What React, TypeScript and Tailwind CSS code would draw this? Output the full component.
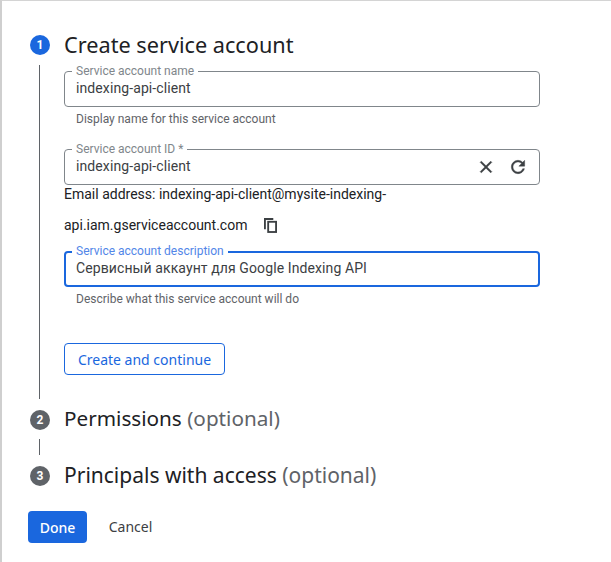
const roboto = "font-['Roboto','Liberation_Sans',sans-serif]";

function Badge({ n, active }: { n: number; active?: boolean }) {
  return (
    <div className={`w-5 h-5 rounded-full flex items-center justify-center text-white text-[12px] font-bold shrink-0 ${active ? "bg-[#1a67de]" : "bg-[#5f6368]"}`}>
      {n}
    </div>
  );
}

function Field({ label, value, focused, helper, children }: { label: string; value: string; focused?: boolean; helper?: string; children?: React.ReactNode }) {
  return (
    <div>
      <div className={`relative w-[476px] h-[36px] rounded-[4px] flex items-center justify-between pr-[12px] ${focused ? "border-2 border-[#1a67de] pl-[10px]" : "border border-[#80868b] pl-[11px]"}`}>
        <span className={`absolute bg-white px-[4px] text-[12px] leading-[14px] ${focused ? "text-[#5286e8] -top-[9px] left-[6px]" : "text-[#80868b] left-[7px] -top-[8px]"}`}>{label}</span>
        <span className="text-[14px] leading-[20px] tracking-[0.1px] text-[#3c4043] pb-[3px]">{value}</span>
        {children}
      </div>
      {helper && <div className="pl-[12px] pt-[4px] text-[12px] leading-[16px] text-[#5f6368]">{helper}</div>}
    </div>
  );
}

export default function App() {
  return (
    <div className={`w-[611px] h-[562px] bg-white border-t border-t-[#d4d4d4] border-l-2 border-l-[#cfcfcf] overflow-hidden ${roboto}`}>
      <div className="pl-[28px] pt-[29px]">
        <div className="flex items-center gap-[14px] h-[30px]">
          <Badge n={1} active />
          <h2 className="font-['Noto_Sans',sans-serif] text-[21.7px] leading-[30px] text-[#202124] -mt-[1px]">Create service account</h2>
        </div>
        <div className="flex h-[334px] mt-[5px]">
          <div className="w-[34px] flex justify-start pl-[9px] shrink-0">
            <div className="w-px bg-[#5f6368]" />
          </div>
          <div className="pt-[6px]">
            <Field label="Service account name" value="indexing-api-client" helper="Display name for this service account" />
            <div className="mt-[22px]">
              <Field label="Service account ID *" value="indexing-api-client">
                <div className="flex items-center gap-[12px] -mr-[1px]">
                  <svg width="20" height="20" viewBox="0 0 24 24" fill="#3c4043" stroke="#3c4043" strokeWidth="0.6"><path d="M19 6.41 17.59 5 12 10.59 6.41 5 5 6.41 10.59 12 5 17.59 6.41 19 12 13.41 17.59 19 19 17.59 13.41 12z" /></svg>
                  <svg width="20" height="20" viewBox="0 0 24 24" fill="#3c4043" stroke="#3c4043" strokeWidth="0.5"><path d="M17.65 6.35C16.2 4.9 14.21 4 12 4c-4.42 0-7.99 3.58-7.99 8s3.57 8 7.99 8c3.73 0 6.84-2.55 7.73-6h-2.08c-.82 2.33-3.04 4-5.65 4-3.31 0-6-2.69-6-6s2.69-6 6-6c1.66 0 3.14.69 4.22 1.78L13 11h7V4l-2.35 2.35z" /></svg>
                </div>
              </Field>
            </div>
            <div className="w-[340px] text-[14px] leading-[20px] text-[#202124] -mt-[1px]">
              <div className="h-[20px]">Email address: indexing-api-client@mysite-indexing-</div>
              <div className="mt-[11px] h-[20px] flex items-center">
                api.iam.gserviceaccount.com
                <svg className="ml-[17px]" width="13" height="15" viewBox="0 0 14 16" fill="none" stroke="#3c4043" strokeWidth="2"><path d="M1 12V1H10" /><rect x="4.5" y="4" width="8.5" height="11" /></svg>
              </div>
            </div>
            <div className="mt-[16px]">
              <Field label="Service account description" value="Сервисный аккаунт для Google Indexing API" focused helper="Describe what this service account will do" />
            </div>
            <button className="mt-[36px] w-[161px] h-[32px] rounded-[4px] border border-[#1a67de] text-[#1a67de] text-[14px] font-['Noto_Sans',sans-serif] font-normal bg-white">Create and continue</button>
          </div>
        </div>
        <div className="flex items-center gap-[14px] h-[30px] mt-[6px]">
          <Badge n={2} />
          <h2 className="font-['Noto_Sans',sans-serif] text-[20.7px] leading-[30px] text-[#202124] -mt-[4px]">Permissions <span className="text-[#5f6368]">(optional)</span></h2>
        </div>
        <div className="pl-[9px] h-[16px] mt-[4px]"><div className="w-px h-full bg-[#5f6368]" /></div>
        <div className="flex items-center gap-[14px] h-[30px] mt-[6px]">
          <Badge n={3} />
          <h2 className="font-['Noto_Sans',sans-serif] text-[21px] leading-[30px] text-[#202124] -mt-[2px]">Principals with access <span className="text-[#5f6368]">(optional)</span></h2>
        </div>
      </div>
      <div className="pl-[26px] mt-[20px] flex items-center gap-[14px]">
        <button className="w-[59px] h-[32px] rounded-[4px] bg-[#1a67de] text-white text-[14px] font-['Noto_Sans',sans-serif] font-medium">Done</button>
        <button className="w-[59px] h-[32px] text-[#3c4043] text-[14px] font-['Noto_Sans',sans-serif] font-normal -mt-[1px]">Cancel</button>
      </div>
    </div>
  );
}
